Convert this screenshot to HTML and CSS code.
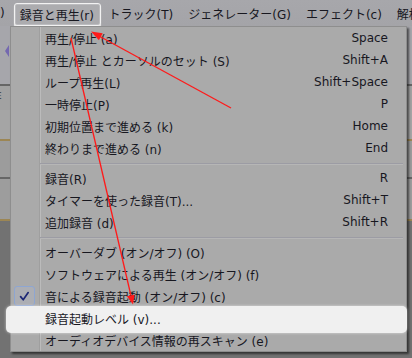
FILE: index.html
```html
<!DOCTYPE html>
<html lang="ja">
<head>
<meta charset="utf-8">
<title>Audacity menu</title>
<link rel="stylesheet" href="styles.css">
</head>
<body>
<div class="screen">
  <div class="menubar">
    <span class="mb-item cut">)</span>
    <span class="mb-item active">録音と再生(r)</span>
    <span class="mb-item">トラック(T)</span>
    <span class="mb-item">ジェネレーター(G)</span>
    <span class="mb-item">エフェクト(c)</span>
    <span class="mb-item">解析(A)</span>
  </div>
  <div class="workspace">
    <div class="band toolbar"><span class="marker"></span></div>
    <div class="band rule-dark"></div>
    <div class="band ruler"><span class="frag">E</span></div>
    <div class="band track-top"></div>
    <div class="band gold"></div>
    <div class="band track-a"></div>
    <div class="band rule-dark"></div>
    <div class="band track-b"></div>
    <div class="band gold"></div>
    <div class="band rest"></div>
  </div>
</div>

<div class="menu">
  <div class="item"><span class="gut"></span><span class="label">再生/停止 (a)</span><span class="key">Space</span></div>
  <div class="item"><span class="gut"></span><span class="label">再生/停止 とカーソルのセット (S)</span><span class="key">Shift+A</span></div>
  <div class="item"><span class="gut"></span><span class="label">ループ再生(L)</span><span class="key">Shift+Space</span></div>
  <div class="item"><span class="gut"></span><span class="label">一時停止(P)</span><span class="key">P</span></div>
  <div class="item"><span class="gut"></span><span class="label">初期位置まで進める (k)</span><span class="key">Home</span></div>
  <div class="item"><span class="gut"></span><span class="label">終わりまで進める (n)</span><span class="key">End</span></div>
  <div class="sep"></div>
  <div class="item"><span class="gut"></span><span class="label">録音(R)</span><span class="key">R</span></div>
  <div class="item"><span class="gut"></span><span class="label">タイマーを使った録音(T)...</span><span class="key">Shift+T</span></div>
  <div class="item"><span class="gut"></span><span class="label">追加録音 (d)</span><span class="key">Shift+R</span></div>
  <div class="sep"></div>
  <div class="item"><span class="gut"></span><span class="label">オーバーダブ (オン/オフ) (O)</span><span class="key"></span></div>
  <div class="item"><span class="gut"></span><span class="label">ソフトウェアによる再生 (オン/オフ) (f)</span><span class="key"></span></div>
  <div class="item"><span class="gut"><span class="checkbox"><svg width="19" height="18" viewBox="0 0 19 18"><path d="M5.6 9.6 L8.2 12.8 L13.2 5.6" fill="none" stroke="#1c2775" stroke-width="1.7" stroke-linecap="round" stroke-linejoin="round"/></svg></span></span><span class="label">音による録音起動 (オン/オフ) (c)</span><span class="key"></span></div>
  <div class="item hot"><span class="gut"></span><span class="label">録音起動レベル (v)...</span><span class="key"></span></div>
  <div class="item"><span class="gut"></span><span class="label">オーディオデバイス情報の再スキャン (e)</span><span class="key"></span></div>
</div>

<svg class="arrows" width="412" height="358" viewBox="0 0 412 358">
  <line x1="231" y1="108" x2="99" y2="36" stroke="#ff1a1a" stroke-width="1.3"/>
  <polygon points="91,31.5 102.7,33.3 98.9,40.3" fill="#ff1a1a"/>
  <line x1="71" y1="38" x2="130.8" y2="295" stroke="#ff1a1a" stroke-width="1.3"/>
  <polygon points="133,304.5 126.9,296.2 134.7,294.4" fill="#ff1a1a"/>
</svg>
</body>
</html>
```

FILE: styles.css
```css
html, body {
  margin: 0;
  padding: 0;
}
body {
  width: 412px;
  height: 358px;
  overflow: hidden;
  background: #8a8a8a;
  font-family: "DejaVu Sans", "Noto Sans CJK JP", sans-serif;
  font-size: 12px;
  color: #17171f;
  position: relative;
}
.screen {
  display: flex;
  flex-direction: column;
  height: 358px;
}
.menubar {
  position: relative;
  z-index: 3;
  height: 26px;
  display: flex;
  align-items: center;
  background: linear-gradient(#a7a7ab, #a4a4a8);
  white-space: nowrap;
  overflow: hidden;
}
.mb-item {
  display: flex;
  align-items: center;
  height: 23px;
  padding: 0 6.5px;
  border: 1px solid transparent;
  box-sizing: border-box;
  flex: none;
}
.mb-item.cut {
  padding: 0;
  margin-left: -1px;
  margin-right: 8px;
}
.mb-item.active {
  padding: 0 6px 0 5px;
  margin-top: 3px;
  align-self: flex-start;
  height: 23px;
  border: 1px solid #f2f2f2;
  border-radius: 3px;
  background: #acacaf;
  box-shadow: 0 2px 1px 0 rgba(255,255,255,0.8), inset 0 0 0 1px rgba(255,255,255,0.2);
}
.workspace {
  flex: 1;
  display: flex;
  flex-direction: column;
}
.band { flex: none; }
.toolbar {
  height: 58px;
  background: #a6a6ab;
  display: flex;
  align-items: flex-start;
}
.marker {
  margin: 19px 0 0 5px;
  width: 0;
  height: 0;
  border-top: 6px solid transparent;
  border-bottom: 6px solid transparent;
  border-right: 4px solid #7468b0;
}
.rule-dark { height: 2px; background: #666; }
.ruler {
  height: 24px;
  background: #a2a2a2;
  font-size: 9px;
  color: #333;
  line-height: 20px;
  overflow: hidden;
}
.frag { margin-left: -4px; }
.track-top { height: 29px; background: #a5a5a5; }
.gold { height: 2px; background: #9c8654; }
.track-a { height: 36px; background: #9c9c9c; }
.track-b { height: 40px; background: #9d9d9d; }
.rest { flex: 1; background: #727272; }

.menu {
  position: absolute;
  z-index: 2;
  left: 10px;
  top: 26px;
  width: 397px;
  box-sizing: border-box;
  border: 1px solid #8e8e8e;
  background: linear-gradient(to right, #aaaaaa 28px, #9f9f9f 28px, #9f9f9f 29px, #bbbbbb 29px, #bbbbbb 30px, #aaaaaa 30px);
  box-shadow: 2px 2px 2px rgba(0,0,0,0.55);
  white-space: nowrap;
}
.item {
  position: relative;
  display: flex;
  align-items: center;
  height: 22px;
  padding-right: 18px;
}
.gut {
  width: 29px;
  align-self: stretch;
  display: flex;
  align-items: center;
  flex: none;
}
.label {
  flex: 1;
  padding-left: 5px;
  position: relative;
  z-index: 1;
}
.key {
  position: relative;
  z-index: 1;
}
.checkbox {
  margin-left: 3px;
  width: 21px;
  height: 20px;
  box-sizing: border-box;
  border: 1px solid #8ea6d2;
  border-radius: 3px;
  background: #acaeb4;
  display: flex;
  align-items: center;
  justify-content: center;
}
.item.hot::before {
  content: "";
  position: absolute;
  left: -5px;
  right: -1px;
  top: -1px;
  bottom: -4px;
  background: #f0f0f0;
  border-radius: 5px;
  box-shadow: 0 0 3px rgba(255,255,255,0.6);
}
.sep {
  height: 8px;
  box-sizing: border-box;
  padding: 4px 3px 0 29px;
}
.sep::before {
  content: "";
  display: block;
  height: 1px;
  background: #9c9ca4;
  border-bottom: 1px solid #b6b6b6;
}
.arrows {
  position: absolute;
  left: 0;
  top: 0;
  z-index: 5;
  pointer-events: none;
}
```
